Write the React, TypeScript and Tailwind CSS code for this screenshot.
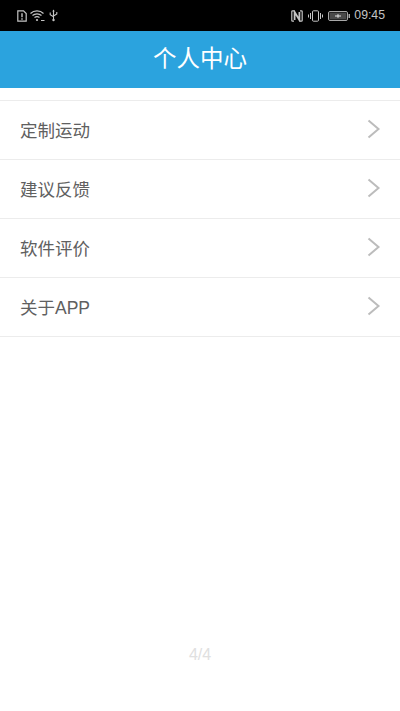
const items = ["定制运动", "建议反馈", "软件评价", "关于APP"];

function Chevron() {
  return (
    <svg width="14" height="20" viewBox="0 0 14 20" fill="none" stroke="#bcbcbc" strokeWidth="2" className="mb-[2px]">
      <path d="M1.5 1.5 L11.5 10 L1.5 18.5" />
    </svg>
  );
}

export default function App() {
  return (
    <div
      className="w-[400px] h-[711px] bg-white flex flex-col overflow-hidden"
      style={{ fontFamily: '"Liberation Sans", "Noto Sans CJK SC", sans-serif' }}
    >
      <div className="h-[31px] bg-black flex items-center justify-between pl-[17px] pr-[15px] text-[#c4c4c4]">
        <div className="flex items-center gap-[3px]">
          <svg width="10" height="12" viewBox="0 0 10 12" fill="none" stroke="#c4c4c4" strokeWidth="1.2">
            <path d="M0.8 0.8 H6.5 L9.2 3.5 V11.2 H0.8 Z" />
            <path d="M5 3.2 V7.2 M5 8.2 V9.8" strokeWidth="1.4" />
          </svg>
          <svg width="15" height="12" viewBox="0 0 15 12" fill="none" stroke="#c4c4c4" strokeWidth="1.2" className="mr-[1px]">
            <path d="M0.5 3.5 C4 0 10 0 13.5 3.5" />
            <path d="M2.5 5.5 C5 3.2 9 3.2 11.5 5.5" />
            <path d="M4.5 7.5 C6 6.4 8 6.4 9.5 7.5" />
            <circle cx="7" cy="10" r="1.1" fill="#c4c4c4" stroke="none" />
            <path d="M11 10.5 H14.5" strokeWidth="1" />
          </svg>
          <svg width="9" height="13" viewBox="0 0 9 13" fill="none" stroke="#c4c4c4" strokeWidth="1.1">
            <path d="M4.5 1 V11.5 M1.2 3.5 V5.8 L4.5 7.8 M7.8 3 V5 L4.5 7" />
            <circle cx="4.5" cy="11" r="1.2" fill="#c4c4c4" stroke="none" />
            <path d="M3.3 2.5 L4.5 0.6 L5.7 2.5 Z" fill="#c4c4c4" stroke="none" />
          </svg>
        </div>
        <div className="flex items-center">
          <svg width="12" height="12" viewBox="0 0 12 12" fill="none" stroke="#c4c4c4" className="mr-[5px]">
            <path d="M3 0.8 H1.6 A0.8 0.8 0 0 0 0.8 1.6 V10.4 A0.8 0.8 0 0 0 1.6 11.2 H3 M9 0.8 H10.4 A0.8 0.8 0 0 1 11.2 1.6 V10.4 A0.8 0.8 0 0 1 10.4 11.2 H9" strokeWidth="1.2" />
            <path d="M3.6 10 V2 L8.4 10 V2" strokeWidth="1.8" />
          </svg>
          <svg width="15" height="12" viewBox="0 0 15 12" fill="none" stroke="#c4c4c4" strokeWidth="1" className="mr-[5px]">
            <rect x="4.5" y="0.8" width="6" height="10.4" rx="1" />
            <path d="M2.5 3 V9 M12.5 3 V9 M0.5 4.5 V7.5 M14.5 4.5 V7.5" />
          </svg>
          <svg width="22" height="10" viewBox="0 0 22 10" fill="none" className="mr-[4px]">
            <rect x="0.5" y="0.5" width="19" height="9" rx="1.5" stroke="#a8a8a8" />
            <rect x="1.5" y="1.5" width="17" height="7" fill="#4a4a4a" />
            <rect x="20.5" y="3" width="1.5" height="4" fill="#a8a8a8" />
            <path d="M7 5 H13 M10 3.2 V6.8" stroke="#e8e8e8" />
          </svg>
          <span className="text-[12.25px] leading-none">09:45</span>
        </div>
      </div>

      <div className="h-[57px] bg-[#2ba3de] flex items-center justify-center text-white text-[23.5px]">
        个人中心
      </div>

      <div className="mt-3 border-t border-[#ececec]">
        {items.map((t) => (
          <div
            key={t}
            className="h-[59px] flex items-center justify-between pl-5 pr-[19px] border-b border-[#ececec] text-[#606060] text-[17.5px]"
          >
            <span className="pt-[3px]">{t}</span>
            <Chevron />
          </div>
        ))}
      </div>

      <div className="flex-1 flex items-end justify-center pb-[49px] text-[16px] leading-[15px] text-[#e0e0e0]">
        4/4
      </div>
    </div>
  );
}
